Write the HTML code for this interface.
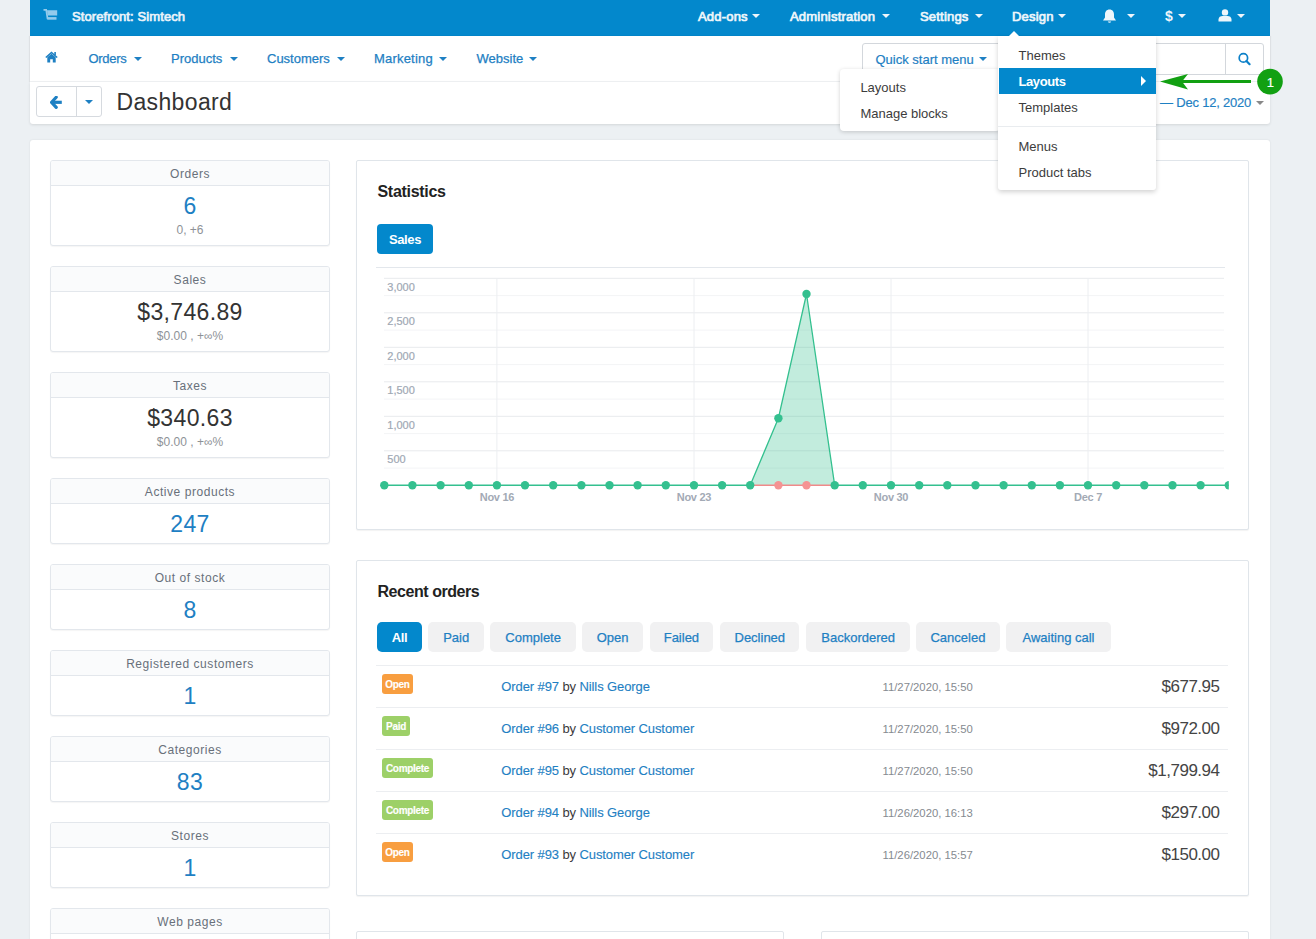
<!DOCTYPE html><html><head><meta charset="utf-8"><style>
html,body{margin:0;padding:0;}
body{width:1316px;height:939px;overflow:hidden;position:relative;background:#ecf0f3;font-family:"Liberation Sans", sans-serif;}
.a{position:absolute;box-sizing:border-box;}
.t{position:absolute;white-space:nowrap;}
svg{position:absolute;}
</style></head><body>
<div class="a" style="left:30px;top:0px;width:1240px;height:36px;background:#0388cc;"></div>
<svg style="left:43px;top:9px" width="16" height="12" viewBox="0 0 16 12"><path d="M0.5 0.9 H3.2 L4.6 10" fill="none" stroke="#93cbec" stroke-width="1.7"/><path d="M4 1.2 H14.2 V6.5 H4.6 Z" fill="#93cbec"/><rect x="4.2" y="8.1" width="9.3" height="2.6" fill="#93cbec"/></svg>
<div class="t" style="top:10.00px;font-size:13px;line-height:13px;color:#eaf3fa;letter-spacing:0.1px;-webkit-text-stroke:0.7px #eaf3fa;left:72px;">Storefront: Simtech</div>
<div class="t" style="top:10.00px;font-size:13px;line-height:13px;color:#eef6fb;letter-spacing:0.2px;-webkit-text-stroke:0.7px #eef6fb;left:698px;">Add-ons</div>
<div class="a" style="left:752px;top:14px;width:0;height:0;border-left:4.0px solid transparent;border-right:4.0px solid transparent;border-top:4px solid #eef6fb;"></div>
<div class="t" style="top:10.00px;font-size:13px;line-height:13px;color:#eef6fb;letter-spacing:0.2px;-webkit-text-stroke:0.7px #eef6fb;left:790px;">Administration</div>
<div class="a" style="left:882px;top:14px;width:0;height:0;border-left:4.0px solid transparent;border-right:4.0px solid transparent;border-top:4px solid #eef6fb;"></div>
<div class="t" style="top:10.00px;font-size:13px;line-height:13px;color:#eef6fb;letter-spacing:0.2px;-webkit-text-stroke:0.7px #eef6fb;left:920px;">Settings</div>
<div class="a" style="left:975px;top:14px;width:0;height:0;border-left:4.0px solid transparent;border-right:4.0px solid transparent;border-top:4px solid #eef6fb;"></div>
<div class="t" style="top:10.00px;font-size:13px;line-height:13px;color:#eef6fb;letter-spacing:0.2px;-webkit-text-stroke:0.7px #eef6fb;left:1012px;">Design</div>
<div class="a" style="left:1058px;top:14px;width:0;height:0;border-left:4.0px solid transparent;border-right:4.0px solid transparent;border-top:4px solid #eef6fb;"></div>
<svg style="left:1102px;top:9px" width="15" height="15" viewBox="0 0 15 15"><path d="M7.5 0.5 C4.5 0.5 3 2.8 3 5.5 V8.5 L1 11.5 H14 L12 8.5 V5.5 C12 2.8 10.5 0.5 7.5 0.5 Z" fill="#eef6fb"/><path d="M5.8 12.5 A1.8 1.8 0 0 0 9.2 12.5 Z" fill="#eef6fb"/></svg>
<div class="a" style="left:1127px;top:14px;width:0;height:0;border-left:4.0px solid transparent;border-right:4.0px solid transparent;border-top:4px solid #eef6fb;"></div>
<div class="t" style="top:9.15px;font-size:14px;line-height:14px;color:#eef6fb;font-weight:700;left:1165px;">$</div>
<div class="a" style="left:1178px;top:14px;width:0;height:0;border-left:4.0px solid transparent;border-right:4.0px solid transparent;border-top:4px solid #eef6fb;"></div>
<svg style="left:1218px;top:9px" width="14" height="13" viewBox="0 0 14 13"><circle cx="7" cy="3.4" r="3.2" fill="#eef6fb"/><path d="M0.5 12.5 V10.5 C0.5 8 2.5 7 4.5 7 H9.5 C11.5 7 13.5 8 13.5 10.5 V12.5 Z" fill="#eef6fb"/></svg>
<div class="a" style="left:1237px;top:14px;width:0;height:0;border-left:4.0px solid transparent;border-right:4.0px solid transparent;border-top:4px solid #eef6fb;"></div>
<div class="a" style="left:30px;top:36px;width:1240px;height:46px;background:#fff;border-bottom:1px solid #f0f2f4;box-shadow:-1px 0 1px rgba(0,0,0,0.06),1px 0 1px rgba(0,0,0,0.06);"></div>
<svg style="left:45px;top:51.3px" width="13" height="12" viewBox="0 0 13 12"><path d="M6.5 0.5 L0.3 6 L1.3 7 L6.5 2.5 L11.7 7 L12.7 6 Z" fill="#1e80c3"/><path d="M2.3 6.2 L6.5 2.7 L10.7 6.2 V11.5 H7.8 V8.2 H5.2 V11.5 H2.3 Z" fill="#1e80c3"/><rect x="9.3" y="1" width="1.6" height="3" fill="#1e80c3"/></svg>
<div class="t" style="top:52.00px;font-size:13px;line-height:13px;color:#1e80c3;letter-spacing:-0.3px;-webkit-text-stroke:0.25px #1e80c3;left:88.5px;">Orders</div>
<div class="a" style="left:133.5px;top:56.5px;width:0;height:0;border-left:4.0px solid transparent;border-right:4.0px solid transparent;border-top:4px solid #1e80c3;"></div>
<div class="t" style="top:52.00px;font-size:13px;line-height:13px;color:#1e80c3;-webkit-text-stroke:0.25px #1e80c3;left:171px;">Products</div>
<div class="a" style="left:229.5px;top:56.5px;width:0;height:0;border-left:4.0px solid transparent;border-right:4.0px solid transparent;border-top:4px solid #1e80c3;"></div>
<div class="t" style="top:52.00px;font-size:13px;line-height:13px;color:#1e80c3;-webkit-text-stroke:0.25px #1e80c3;left:267px;">Customers</div>
<div class="a" style="left:336.5px;top:56.5px;width:0;height:0;border-left:4.0px solid transparent;border-right:4.0px solid transparent;border-top:4px solid #1e80c3;"></div>
<div class="t" style="top:52.00px;font-size:13px;line-height:13px;color:#1e80c3;letter-spacing:0.2px;-webkit-text-stroke:0.25px #1e80c3;left:374px;">Marketing</div>
<div class="a" style="left:438.5px;top:56.5px;width:0;height:0;border-left:4.0px solid transparent;border-right:4.0px solid transparent;border-top:4px solid #1e80c3;"></div>
<div class="t" style="top:52.00px;font-size:13px;line-height:13px;color:#1e80c3;-webkit-text-stroke:0.25px #1e80c3;left:476.5px;">Website</div>
<div class="a" style="left:528.5px;top:56.5px;width:0;height:0;border-left:4.0px solid transparent;border-right:4.0px solid transparent;border-top:4px solid #1e80c3;"></div>
<div class="a" style="left:862px;top:43px;width:402px;height:32px;background:#fff;border:1px solid #d3d7dc;border-radius:3px;"></div>
<div class="t" style="top:52.50px;font-size:13px;line-height:13px;color:#1e80c3;-webkit-text-stroke:0.2px #1e80c3;left:875.5px;">Quick start menu</div>
<div class="a" style="left:978.5px;top:57px;width:0;height:0;border-left:4.0px solid transparent;border-right:4.0px solid transparent;border-top:4px solid #1e80c3;"></div>
<div class="a" style="left:1225px;top:43px;width:1px;height:32px;background:#d3d7dc;"></div>
<svg style="left:1237px;top:52px" width="15" height="14" viewBox="0 0 15 14"><circle cx="6.4" cy="5.9" r="4.2" fill="none" stroke="#0c80c8" stroke-width="1.7"/><path d="M9.4 9 L12.6 12.2" stroke="#0c80c8" stroke-width="2.2" stroke-linecap="round"/></svg>
<div class="a" style="left:30px;top:82px;width:1240px;height:42px;background:#fff;box-shadow:0 1px 3px rgba(0,0,0,0.11);border-radius:0 0 3px 3px;"></div>
<div class="a" style="left:36px;top:86px;width:66px;height:31px;background:#fff;border:1px solid #d6dadf;border-radius:3px;"></div>
<div class="a" style="left:76px;top:86px;width:1px;height:31px;background:#d6dadf;"></div>
<svg style="left:50px;top:96px" width="13" height="13" viewBox="0 0 13 13"><path d="M6.2 1.2 L1.6 6.3 L6.2 11.4" fill="none" stroke="#1e80c3" stroke-width="3.2" stroke-linejoin="miter" stroke-linecap="round"/><path d="M2.5 6.3 H11.8" stroke="#1e80c3" stroke-width="3.2"/></svg>
<div class="a" style="left:85px;top:100px;width:0;height:0;border-left:4.0px solid transparent;border-right:4.0px solid transparent;border-top:4px solid #1e80c3;"></div>
<div class="t" style="top:90.63px;font-size:23px;line-height:23px;color:#333;letter-spacing:0.35px;left:116.5px;">Dashboard</div>
<div class="t" style="top:95.70px;font-size:13px;line-height:13px;color:#1e80c3;letter-spacing:-0.2px;-webkit-text-stroke:0.15px #1e80c3;left:1160px;">— Dec 12, 2020</div>
<div class="a" style="left:1256px;top:101px;width:0;height:0;border-left:4.0px solid transparent;border-right:4.0px solid transparent;border-top:4px solid #888;"></div>
<div class="a" style="left:30px;top:140px;width:1240px;height:820px;background:#fff;border-radius:3px;box-shadow:0 0 2px rgba(0,0,0,0.10);"></div>
<div class="a" style="left:50px;top:160px;width:280px;height:86px;background:#fff;border:1px solid #e3e7ec;border-radius:3px;box-shadow:0 1px 1px rgba(0,0,0,0.04);"></div>
<div class="a" style="left:51px;top:161px;width:278px;height:24.5px;background:#fafbfc;border-bottom:1px solid #e3e7ec;border-radius:2px 2px 0 0;"></div>
<div class="t" style="top:167.84px;font-size:12px;line-height:12px;color:#68707a;letter-spacing:0.55px;left:50.0px;width:280px;text-align:center;">Orders</div>
<div class="t" style="top:194.53px;font-size:23px;line-height:23px;color:#1e80c3;letter-spacing:0.35px;left:50.0px;width:280px;text-align:center;">6</div>
<div class="t" style="top:223.54px;font-size:12px;line-height:12px;color:#8e9297;left:50.0px;width:280px;text-align:center;">0, +6</div>
<div class="a" style="left:50px;top:266px;width:280px;height:86px;background:#fff;border:1px solid #e3e7ec;border-radius:3px;box-shadow:0 1px 1px rgba(0,0,0,0.04);"></div>
<div class="a" style="left:51px;top:267px;width:278px;height:24.5px;background:#fafbfc;border-bottom:1px solid #e3e7ec;border-radius:2px 2px 0 0;"></div>
<div class="t" style="top:273.84px;font-size:12px;line-height:12px;color:#68707a;letter-spacing:0.55px;left:50.0px;width:280px;text-align:center;">Sales</div>
<div class="t" style="top:300.53px;font-size:23px;line-height:23px;color:#333;letter-spacing:0.35px;left:50.0px;width:280px;text-align:center;">$3,746.89</div>
<div class="t" style="top:329.54px;font-size:12px;line-height:12px;color:#8e9297;left:50.0px;width:280px;text-align:center;">$0.00 , +∞%</div>
<div class="a" style="left:50px;top:372px;width:280px;height:86px;background:#fff;border:1px solid #e3e7ec;border-radius:3px;box-shadow:0 1px 1px rgba(0,0,0,0.04);"></div>
<div class="a" style="left:51px;top:373px;width:278px;height:24.5px;background:#fafbfc;border-bottom:1px solid #e3e7ec;border-radius:2px 2px 0 0;"></div>
<div class="t" style="top:379.84px;font-size:12px;line-height:12px;color:#68707a;letter-spacing:0.55px;left:50.0px;width:280px;text-align:center;">Taxes</div>
<div class="t" style="top:406.53px;font-size:23px;line-height:23px;color:#333;letter-spacing:0.35px;left:50.0px;width:280px;text-align:center;">$340.63</div>
<div class="t" style="top:435.54px;font-size:12px;line-height:12px;color:#8e9297;left:50.0px;width:280px;text-align:center;">$0.00 , +∞%</div>
<div class="a" style="left:50px;top:478px;width:280px;height:66px;background:#fff;border:1px solid #e3e7ec;border-radius:3px;box-shadow:0 1px 1px rgba(0,0,0,0.04);"></div>
<div class="a" style="left:51px;top:479px;width:278px;height:24.5px;background:#fafbfc;border-bottom:1px solid #e3e7ec;border-radius:2px 2px 0 0;"></div>
<div class="t" style="top:485.84px;font-size:12px;line-height:12px;color:#68707a;letter-spacing:0.55px;left:50.0px;width:280px;text-align:center;">Active products</div>
<div class="t" style="top:512.53px;font-size:23px;line-height:23px;color:#1e80c3;letter-spacing:0.35px;left:50.0px;width:280px;text-align:center;">247</div>
<div class="a" style="left:50px;top:564px;width:280px;height:66px;background:#fff;border:1px solid #e3e7ec;border-radius:3px;box-shadow:0 1px 1px rgba(0,0,0,0.04);"></div>
<div class="a" style="left:51px;top:565px;width:278px;height:24.5px;background:#fafbfc;border-bottom:1px solid #e3e7ec;border-radius:2px 2px 0 0;"></div>
<div class="t" style="top:571.84px;font-size:12px;line-height:12px;color:#68707a;letter-spacing:0.55px;left:50.0px;width:280px;text-align:center;">Out of stock</div>
<div class="t" style="top:598.53px;font-size:23px;line-height:23px;color:#1e80c3;letter-spacing:0.35px;left:50.0px;width:280px;text-align:center;">8</div>
<div class="a" style="left:50px;top:650px;width:280px;height:66px;background:#fff;border:1px solid #e3e7ec;border-radius:3px;box-shadow:0 1px 1px rgba(0,0,0,0.04);"></div>
<div class="a" style="left:51px;top:651px;width:278px;height:24.5px;background:#fafbfc;border-bottom:1px solid #e3e7ec;border-radius:2px 2px 0 0;"></div>
<div class="t" style="top:657.84px;font-size:12px;line-height:12px;color:#68707a;letter-spacing:0.55px;left:50.0px;width:280px;text-align:center;">Registered customers</div>
<div class="t" style="top:684.53px;font-size:23px;line-height:23px;color:#1e80c3;letter-spacing:0.35px;left:50.0px;width:280px;text-align:center;">1</div>
<div class="a" style="left:50px;top:736px;width:280px;height:66px;background:#fff;border:1px solid #e3e7ec;border-radius:3px;box-shadow:0 1px 1px rgba(0,0,0,0.04);"></div>
<div class="a" style="left:51px;top:737px;width:278px;height:24.5px;background:#fafbfc;border-bottom:1px solid #e3e7ec;border-radius:2px 2px 0 0;"></div>
<div class="t" style="top:743.84px;font-size:12px;line-height:12px;color:#68707a;letter-spacing:0.55px;left:50.0px;width:280px;text-align:center;">Categories</div>
<div class="t" style="top:770.53px;font-size:23px;line-height:23px;color:#1e80c3;letter-spacing:0.35px;left:50.0px;width:280px;text-align:center;">83</div>
<div class="a" style="left:50px;top:822px;width:280px;height:66px;background:#fff;border:1px solid #e3e7ec;border-radius:3px;box-shadow:0 1px 1px rgba(0,0,0,0.04);"></div>
<div class="a" style="left:51px;top:823px;width:278px;height:24.5px;background:#fafbfc;border-bottom:1px solid #e3e7ec;border-radius:2px 2px 0 0;"></div>
<div class="t" style="top:829.84px;font-size:12px;line-height:12px;color:#68707a;letter-spacing:0.55px;left:50.0px;width:280px;text-align:center;">Stores</div>
<div class="t" style="top:856.53px;font-size:23px;line-height:23px;color:#1e80c3;letter-spacing:0.35px;left:50.0px;width:280px;text-align:center;">1</div>
<div class="a" style="left:50px;top:908px;width:280px;height:66px;background:#fff;border:1px solid #e3e7ec;border-radius:3px;box-shadow:0 1px 1px rgba(0,0,0,0.04);"></div>
<div class="a" style="left:51px;top:909px;width:278px;height:24.5px;background:#fafbfc;border-bottom:1px solid #e3e7ec;border-radius:2px 2px 0 0;"></div>
<div class="t" style="top:915.84px;font-size:12px;line-height:12px;color:#68707a;letter-spacing:0.55px;left:50.0px;width:280px;text-align:center;">Web pages</div>
<div class="a" style="left:356px;top:160px;width:893px;height:370px;background:#fff;border:1px solid #e0e5ea;border-radius:2px;box-shadow:0 1px 1px rgba(0,0,0,0.05);"></div>
<div class="t" style="top:183.96px;font-size:16px;line-height:16px;color:#222;font-weight:700;letter-spacing:-0.3px;left:377.5px;">Statistics</div>
<div class="a" style="left:377px;top:224px;width:56px;height:30px;background:#0388cc;border-radius:4px;"></div>
<div class="t" style="top:233.00px;font-size:13px;line-height:13px;color:#fff;font-weight:700;letter-spacing:-0.4px;left:377.0px;width:56px;text-align:center;">Sales</div>
<div class="a" style="left:376px;top:267px;width:849px;height:1px;background:#e3e7ec;"></div>
<svg style="left:0;top:0" width="1316" height="939" viewBox="0 0 1316 939"><defs><clipPath id="cp"><rect x="370" y="270" width="858.8" height="240"/></clipPath></defs><g clip-path="url(#cp)"><line x1="384" y1="468.1" x2="1224" y2="468.1" stroke="#f3f4f6" stroke-width="1"/><line x1="384" y1="433.6" x2="1224" y2="433.6" stroke="#f3f4f6" stroke-width="1"/><line x1="384" y1="399.1" x2="1224" y2="399.1" stroke="#f3f4f6" stroke-width="1"/><line x1="384" y1="364.6" x2="1224" y2="364.6" stroke="#f3f4f6" stroke-width="1"/><line x1="384" y1="330.1" x2="1224" y2="330.1" stroke="#f3f4f6" stroke-width="1"/><line x1="384" y1="295.6" x2="1224" y2="295.6" stroke="#f3f4f6" stroke-width="1"/><line x1="384" y1="450.8" x2="1224" y2="450.8" stroke="#e8eaed" stroke-width="1"/><line x1="384" y1="416.3" x2="1224" y2="416.3" stroke="#e8eaed" stroke-width="1"/><line x1="384" y1="381.8" x2="1224" y2="381.8" stroke="#e8eaed" stroke-width="1"/><line x1="384" y1="347.3" x2="1224" y2="347.3" stroke="#e8eaed" stroke-width="1"/><line x1="384" y1="312.8" x2="1224" y2="312.8" stroke="#e8eaed" stroke-width="1"/><line x1="384" y1="278.3" x2="1224" y2="278.3" stroke="#e8eaed" stroke-width="1"/><line x1="496.9" y1="278" x2="496.9" y2="485" stroke="#eceef1" stroke-width="1"/><line x1="694.0" y1="278" x2="694.0" y2="485" stroke="#eceef1" stroke-width="1"/><line x1="891.0" y1="278" x2="891.0" y2="485" stroke="#eceef1" stroke-width="1"/><line x1="1088.0" y1="278" x2="1088.0" y2="485" stroke="#eceef1" stroke-width="1"/><polygon points="750.2,485.3 778.4,418.2 806.5,294.0 834.7,485.3" fill="#34c08f" fill-opacity="0.3"/><line x1="750.2" y1="485.3" x2="834.7" y2="485.3" stroke="#f08a8a" stroke-width="1.5"/><polyline points="384.3,485.3 750.2,485.3" fill="none" stroke="#34c08f" stroke-width="1.5"/><polyline points="834.7,485.3 1228.8,485.3" fill="none" stroke="#34c08f" stroke-width="1.5"/><polyline points="750.2,485.3 778.4,418.2 806.5,294.0 834.7,485.3" fill="none" stroke="#34c08f" stroke-width="1.3"/><circle cx="778.4" cy="485.3" r="4.2" fill="#f59393"/><circle cx="806.5" cy="485.3" r="4.2" fill="#f59393"/><circle cx="384.3" cy="485.3" r="4.2" fill="#34c08f"/><circle cx="412.4" cy="485.3" r="4.2" fill="#34c08f"/><circle cx="440.6" cy="485.3" r="4.2" fill="#34c08f"/><circle cx="468.8" cy="485.3" r="4.2" fill="#34c08f"/><circle cx="496.9" cy="485.3" r="4.2" fill="#34c08f"/><circle cx="525.0" cy="485.3" r="4.2" fill="#34c08f"/><circle cx="553.2" cy="485.3" r="4.2" fill="#34c08f"/><circle cx="581.4" cy="485.3" r="4.2" fill="#34c08f"/><circle cx="609.5" cy="485.3" r="4.2" fill="#34c08f"/><circle cx="637.6" cy="485.3" r="4.2" fill="#34c08f"/><circle cx="665.8" cy="485.3" r="4.2" fill="#34c08f"/><circle cx="694.0" cy="485.3" r="4.2" fill="#34c08f"/><circle cx="722.1" cy="485.3" r="4.2" fill="#34c08f"/><circle cx="750.2" cy="485.3" r="4.2" fill="#34c08f"/><circle cx="778.4" cy="418.2" r="4.2" fill="#34c08f"/><circle cx="806.5" cy="294.0" r="4.2" fill="#34c08f"/><circle cx="834.7" cy="485.3" r="4.2" fill="#34c08f"/><circle cx="862.8" cy="485.3" r="4.2" fill="#34c08f"/><circle cx="891.0" cy="485.3" r="4.2" fill="#34c08f"/><circle cx="919.2" cy="485.3" r="4.2" fill="#34c08f"/><circle cx="947.3" cy="485.3" r="4.2" fill="#34c08f"/><circle cx="975.5" cy="485.3" r="4.2" fill="#34c08f"/><circle cx="1003.6" cy="485.3" r="4.2" fill="#34c08f"/><circle cx="1031.8" cy="485.3" r="4.2" fill="#34c08f"/><circle cx="1059.9" cy="485.3" r="4.2" fill="#34c08f"/><circle cx="1088.0" cy="485.3" r="4.2" fill="#34c08f"/><circle cx="1116.2" cy="485.3" r="4.2" fill="#34c08f"/><circle cx="1144.3" cy="485.3" r="4.2" fill="#34c08f"/><circle cx="1172.5" cy="485.3" r="4.2" fill="#34c08f"/><circle cx="1200.6" cy="485.3" r="4.2" fill="#34c08f"/><circle cx="1228.8" cy="485.3" r="4.2" fill="#34c08f"/></g></svg>
<div class="t" style="top:454.19px;font-size:11px;line-height:11px;color:#a0a8b4;-webkit-text-stroke:0.2px #a0a8b4;left:387.3px;">500</div>
<div class="t" style="top:419.69px;font-size:11px;line-height:11px;color:#a0a8b4;-webkit-text-stroke:0.2px #a0a8b4;left:387.3px;">1,000</div>
<div class="t" style="top:385.19px;font-size:11px;line-height:11px;color:#a0a8b4;-webkit-text-stroke:0.2px #a0a8b4;left:387.3px;">1,500</div>
<div class="t" style="top:350.69px;font-size:11px;line-height:11px;color:#a0a8b4;-webkit-text-stroke:0.2px #a0a8b4;left:387.3px;">2,000</div>
<div class="t" style="top:316.19px;font-size:11px;line-height:11px;color:#a0a8b4;-webkit-text-stroke:0.2px #a0a8b4;left:387.3px;">2,500</div>
<div class="t" style="top:281.69px;font-size:11px;line-height:11px;color:#a0a8b4;-webkit-text-stroke:0.2px #a0a8b4;left:387.3px;">3,000</div>
<div class="t" style="top:492.29px;font-size:11px;line-height:11px;color:#a3aab5;font-weight:700;letter-spacing:-0.3px;left:456.9px;width:80px;text-align:center;">Nov 16</div>
<div class="t" style="top:492.29px;font-size:11px;line-height:11px;color:#a3aab5;font-weight:700;letter-spacing:-0.3px;left:653.95px;width:80px;text-align:center;">Nov 23</div>
<div class="t" style="top:492.29px;font-size:11px;line-height:11px;color:#a3aab5;font-weight:700;letter-spacing:-0.3px;left:851.0px;width:80px;text-align:center;">Nov 30</div>
<div class="t" style="top:492.29px;font-size:11px;line-height:11px;color:#a3aab5;font-weight:700;letter-spacing:-0.3px;left:1048.05px;width:80px;text-align:center;">Dec 7</div>
<div class="a" style="left:356px;top:560px;width:893px;height:336px;background:#fff;border:1px solid #e0e5ea;border-radius:2px;box-shadow:0 1px 1px rgba(0,0,0,0.05);"></div>
<div class="t" style="top:584.06px;font-size:16px;line-height:16px;color:#222;font-weight:700;letter-spacing:-0.45px;left:377.5px;">Recent orders</div>
<div class="a" style="left:377px;top:622.3px;width:45px;height:29.5px;background:#0388cc;border-radius:5px;"></div>
<div class="t" style="top:630.80px;font-size:13px;line-height:13px;color:#fff;font-weight:700;letter-spacing:-0.3px;left:377.0px;width:45px;text-align:center;">All</div>
<div class="a" style="left:428.3px;top:622.3px;width:55.7px;height:29.5px;background:#f1f1f2;border-radius:5px;"></div>
<div class="t" style="top:630.80px;font-size:13px;line-height:13px;color:#1e80c3;-webkit-text-stroke:0.25px #1e80c3;left:428.3px;width:55.7px;text-align:center;">Paid</div>
<div class="a" style="left:490.3px;top:622.3px;width:85.7px;height:29.5px;background:#f1f1f2;border-radius:5px;"></div>
<div class="t" style="top:630.80px;font-size:13px;line-height:13px;color:#1e80c3;-webkit-text-stroke:0.25px #1e80c3;left:490.29999999999995px;width:85.7px;text-align:center;">Complete</div>
<div class="a" style="left:582.4px;top:622.3px;width:60.3px;height:29.5px;background:#f1f1f2;border-radius:5px;"></div>
<div class="t" style="top:630.80px;font-size:13px;line-height:13px;color:#1e80c3;-webkit-text-stroke:0.25px #1e80c3;left:582.4px;width:60.3px;text-align:center;">Open</div>
<div class="a" style="left:649.5px;top:622.3px;width:63.8px;height:29.5px;background:#f1f1f2;border-radius:5px;"></div>
<div class="t" style="top:630.80px;font-size:13px;line-height:13px;color:#1e80c3;-webkit-text-stroke:0.25px #1e80c3;left:649.5px;width:63.8px;text-align:center;">Failed</div>
<div class="a" style="left:720.3px;top:622.3px;width:79px;height:29.5px;background:#f1f1f2;border-radius:5px;"></div>
<div class="t" style="top:630.80px;font-size:13px;line-height:13px;color:#1e80c3;-webkit-text-stroke:0.25px #1e80c3;left:720.3px;width:79px;text-align:center;">Declined</div>
<div class="a" style="left:806.4px;top:622.3px;width:103.5px;height:29.5px;background:#f1f1f2;border-radius:5px;"></div>
<div class="t" style="top:630.80px;font-size:13px;line-height:13px;color:#1e80c3;-webkit-text-stroke:0.25px #1e80c3;left:806.4px;width:103.5px;text-align:center;">Backordered</div>
<div class="a" style="left:916.3px;top:622.3px;width:83.3px;height:29.5px;background:#f1f1f2;border-radius:5px;"></div>
<div class="t" style="top:630.80px;font-size:13px;line-height:13px;color:#1e80c3;-webkit-text-stroke:0.25px #1e80c3;left:916.3px;width:83.3px;text-align:center;">Canceled</div>
<div class="a" style="left:1006px;top:622.3px;width:105px;height:29.5px;background:#f1f1f2;border-radius:5px;"></div>
<div class="t" style="top:630.80px;font-size:13px;line-height:13px;color:#1e80c3;-webkit-text-stroke:0.25px #1e80c3;left:1006.0px;width:105px;text-align:center;">Awaiting call</div>
<div class="a" style="left:376px;top:665px;width:852px;height:1px;background:#eceef1;"></div>
<div class="a" style="left:382px;top:674px;width:31px;height:19.7px;background:#f89e40;border-radius:3px;"></div>
<div class="t" style="top:679.83px;font-size:10px;line-height:10px;color:#fff;font-weight:700;letter-spacing:-0.3px;-webkit-text-stroke:0.15px #fff;left:382.0px;width:31px;text-align:center;">Open</div>
<div class="t" style="top:680.40px;font-size:13px;line-height:13px;color:#1e80c3;letter-spacing:-0.1px;-webkit-text-stroke:0.12px #1e80c3;left:501.3px;">Order #97 <span style="color:#3a3a3a;-webkit-text-stroke:0">by</span> Nills George</div>
<div class="t" style="top:681.93px;font-size:11.3px;line-height:11.3px;color:#858a90;left:882.5px;">11/27/2020, 15:50</div>
<div class="t" style="top:678.01px;font-size:17px;line-height:17px;color:#444;letter-spacing:-0.5px;left:1019.5px;width:200px;text-align:right;">$677.95</div>
<div class="a" style="left:376px;top:707px;width:852px;height:1px;background:#eceef1;"></div>
<div class="a" style="left:382px;top:716px;width:28px;height:19.7px;background:#9dd068;border-radius:3px;"></div>
<div class="t" style="top:721.83px;font-size:10px;line-height:10px;color:#fff;font-weight:700;letter-spacing:-0.3px;-webkit-text-stroke:0.15px #fff;left:382.0px;width:28px;text-align:center;">Paid</div>
<div class="t" style="top:722.40px;font-size:13px;line-height:13px;color:#1e80c3;letter-spacing:-0.1px;-webkit-text-stroke:0.12px #1e80c3;left:501.3px;">Order #96 <span style="color:#3a3a3a;-webkit-text-stroke:0">by</span> Customer Customer</div>
<div class="t" style="top:723.93px;font-size:11.3px;line-height:11.3px;color:#858a90;left:882.5px;">11/27/2020, 15:50</div>
<div class="t" style="top:720.01px;font-size:17px;line-height:17px;color:#444;letter-spacing:-0.5px;left:1019.5px;width:200px;text-align:right;">$972.00</div>
<div class="a" style="left:376px;top:749px;width:852px;height:1px;background:#eceef1;"></div>
<div class="a" style="left:382px;top:758px;width:51px;height:19.7px;background:#9dd068;border-radius:3px;"></div>
<div class="t" style="top:763.83px;font-size:10px;line-height:10px;color:#fff;font-weight:700;letter-spacing:-0.3px;-webkit-text-stroke:0.15px #fff;left:382.0px;width:51px;text-align:center;">Complete</div>
<div class="t" style="top:764.40px;font-size:13px;line-height:13px;color:#1e80c3;letter-spacing:-0.1px;-webkit-text-stroke:0.12px #1e80c3;left:501.3px;">Order #95 <span style="color:#3a3a3a;-webkit-text-stroke:0">by</span> Customer Customer</div>
<div class="t" style="top:765.93px;font-size:11.3px;line-height:11.3px;color:#858a90;left:882.5px;">11/27/2020, 15:50</div>
<div class="t" style="top:762.01px;font-size:17px;line-height:17px;color:#444;letter-spacing:-0.5px;left:1019.5px;width:200px;text-align:right;">$1,799.94</div>
<div class="a" style="left:376px;top:791px;width:852px;height:1px;background:#eceef1;"></div>
<div class="a" style="left:382px;top:800px;width:51px;height:19.7px;background:#9dd068;border-radius:3px;"></div>
<div class="t" style="top:805.83px;font-size:10px;line-height:10px;color:#fff;font-weight:700;letter-spacing:-0.3px;-webkit-text-stroke:0.15px #fff;left:382.0px;width:51px;text-align:center;">Complete</div>
<div class="t" style="top:806.40px;font-size:13px;line-height:13px;color:#1e80c3;letter-spacing:-0.1px;-webkit-text-stroke:0.12px #1e80c3;left:501.3px;">Order #94 <span style="color:#3a3a3a;-webkit-text-stroke:0">by</span> Nills George</div>
<div class="t" style="top:807.93px;font-size:11.3px;line-height:11.3px;color:#858a90;left:882.5px;">11/26/2020, 16:13</div>
<div class="t" style="top:804.01px;font-size:17px;line-height:17px;color:#444;letter-spacing:-0.5px;left:1019.5px;width:200px;text-align:right;">$297.00</div>
<div class="a" style="left:376px;top:833px;width:852px;height:1px;background:#eceef1;"></div>
<div class="a" style="left:382px;top:842px;width:31px;height:19.7px;background:#f89e40;border-radius:3px;"></div>
<div class="t" style="top:847.83px;font-size:10px;line-height:10px;color:#fff;font-weight:700;letter-spacing:-0.3px;-webkit-text-stroke:0.15px #fff;left:382.0px;width:31px;text-align:center;">Open</div>
<div class="t" style="top:848.40px;font-size:13px;line-height:13px;color:#1e80c3;letter-spacing:-0.1px;-webkit-text-stroke:0.12px #1e80c3;left:501.3px;">Order #93 <span style="color:#3a3a3a;-webkit-text-stroke:0">by</span> Customer Customer</div>
<div class="t" style="top:849.93px;font-size:11.3px;line-height:11.3px;color:#858a90;left:882.5px;">11/26/2020, 15:57</div>
<div class="t" style="top:846.01px;font-size:17px;line-height:17px;color:#444;letter-spacing:-0.5px;left:1019.5px;width:200px;text-align:right;">$150.00</div>
<div class="a" style="left:356px;top:931px;width:428px;height:40px;background:#fff;border:1px solid #e0e5ea;border-radius:2px;"></div>
<div class="a" style="left:821px;top:931px;width:428px;height:40px;background:#fff;border:1px solid #e0e5ea;border-radius:2px;"></div>
<div class="a" style="left:840px;top:68.5px;width:160px;height:62.5px;background:#fff;border-radius:4px;box-shadow:0 1px 4px rgba(0,0,0,0.18);"></div>
<div class="t" style="top:80.80px;font-size:13px;line-height:13px;color:#3c3c3c;left:860.4px;">Layouts</div>
<div class="t" style="top:106.80px;font-size:13px;line-height:13px;color:#3c3c3c;left:860.4px;">Manage blocks</div>
<div class="a" style="left:998px;top:36px;width:158px;height:153.5px;background:#fff;border-radius:0 0 3px 3px;box-shadow:0 2px 5px rgba(0,0,0,0.18);"></div>
<div class="a" style="left:1008.5px;top:31px;width:0;height:0;border-left:5.5px solid transparent;border-right:5.5px solid transparent;border-bottom:5px solid #fff;"></div>
<div class="t" style="top:48.50px;font-size:13px;line-height:13px;color:#3c3c3c;left:1018.5px;">Themes</div>
<div class="a" style="left:998.5px;top:68px;width:157.5px;height:25.7px;background:#0388cc;"></div>
<div class="t" style="top:74.60px;font-size:13px;line-height:13px;color:#fff;font-weight:700;letter-spacing:-0.4px;left:1018.5px;">Layouts</div>
<div class="a" style="left:1141px;top:76px;width:0;height:0;border-top:5px solid transparent;border-bottom:5px solid transparent;border-left:5px solid #fff;"></div>
<div class="t" style="top:100.60px;font-size:13px;line-height:13px;color:#3c3c3c;left:1018.5px;">Templates</div>
<div class="a" style="left:998px;top:126px;width:158px;height:1px;background:#e9ecef;"></div>
<div class="t" style="top:139.80px;font-size:13px;line-height:13px;color:#3c3c3c;left:1018.5px;">Menus</div>
<div class="t" style="top:166.00px;font-size:13px;line-height:13px;color:#3c3c3c;left:1018.5px;">Product tabs</div>
<svg style="left:1155px;top:66px" width="130" height="32" viewBox="1155 66 130 32"><path d="M1251 81.6 H1175" stroke="#12a012" stroke-width="3"/><path d="M1160 81.6 L1188 74 L1182 81.6 L1188 89.5 Z" fill="#12a012"/><circle cx="1270" cy="81.6" r="12.8" fill="#12a012"/></svg>
<div class="t" style="top:76.00px;font-size:13px;line-height:13px;color:#fff;-webkit-text-stroke:0.2px #fff;left:1257.3px;width:26px;text-align:center;">1</div>
</body></html>
